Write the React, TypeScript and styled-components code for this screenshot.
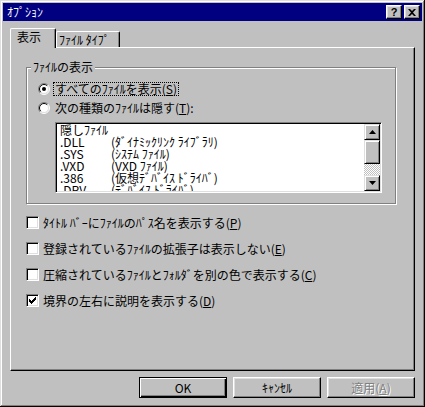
import React from 'react';
import styled, { createGlobalStyle } from 'styled-components';

const face = '#c0c0c0';
const shade = '#808080';
const light = '#dfdfdf';

const GlobalStyle = createGlobalStyle`
  body {
    margin: 0;
    background: ${face};
  }
  * {
    box-sizing: border-box;
  }
`;

const Window = styled.div`
  width: 425px;
  height: 407px;
  padding: 3px;
  display: flex;
  flex-direction: column;
  background: ${face};
  box-shadow: inset -1px -1px #000, inset 1px 1px ${light}, inset -2px -2px ${shade}, inset 2px 2px #fff;
  font-family: 'Noto Sans CJK JP', 'Noto Sans', sans-serif;
  font-size: 12px;
  color: #000;
`;

const TitleBar = styled.div`
  height: 18px;
  display: flex;
  align-items: center;
  padding: 0 2px;
  background: #000080;
`;

const TitleText = styled.span`
  padding-left: 2px;
  color: #fff;
  line-height: 14px;
`;

const CaptionButtons = styled.div`
  margin-left: auto;
  display: flex;
  gap: 2px;
`;

const CaptionButton = styled.div`
  width: 16px;
  height: 14px;
  display: flex;
  align-items: center;
  justify-content: center;
  background: ${face};
  border: 1px solid;
  border-color: #fff #000 #000 #fff;
  box-shadow: inset -1px -1px ${shade}, inset 1px 1px ${light};
  font-family: 'Liberation Sans', sans-serif;
  font-weight: bold;
  font-size: 11px;
  line-height: 11px;
`;

const Body = styled.div`
  flex: 1;
  display: flex;
  flex-direction: column;
  padding: 7px 7px 6px;
`;

const TabRow = styled.div`
  height: 19px;
  display: flex;
  align-items: flex-end;
`;

const Tab = styled.div<{ $active?: boolean; $width: number; $pad: number }>`
  position: relative;
  z-index: ${(p) => (p.$active ? 1 : 0)};
  width: ${(p) => p.$width}px;
  height: ${(p) => (p.$active ? 20 : 16)}px;
  margin-bottom: ${(p) => (p.$active ? -1 : 0)}px;
  padding: 1px 0 0 ${(p) => p.$pad}px;
  background: ${face};
  border: 1px solid;
  border-bottom: none;
  border-color: #fff #000 #000 #fff;
  border-radius: 2px 2px 0 0;
  box-shadow: inset -1px 0 ${shade};
  line-height: 14px;
  white-space: nowrap;
`;

const Panel = styled.div`
  height: 324px;
  display: flex;
  flex-direction: column;
  padding: 12px 18px 0 15px;
  border: 1px solid;
  border-color: #fff #000 #000 #fff;
  box-shadow: inset -1px -1px ${shade};
`;

const Group = styled.fieldset`
  margin: 0;
  padding: 0 0 10px;
  min-width: 0;
  border: 1px solid ${shade};
  box-shadow: inset 1px 1px #fff, 1px 1px #fff;
`;

const GroupTitle = styled.legend`
  margin-left: 4px;
  padding: 0 2px;
  line-height: 14px;
  background: ${face};
`;

const RadioList = styled.div`
  padding: 5px 0 0 11px;
  display: flex;
  flex-direction: column;
`;

const OptionRow = styled.div<{ $height: number; $gap: number }>`
  height: ${(p) => p.$height}px;
  display: flex;
  align-items: center;
  gap: ${(p) => p.$gap}px;
  white-space: nowrap;
`;

const Label = styled.span<{ $focused?: boolean }>`
  padding: 0 1px;
  line-height: 12px;
  border: 1px dotted ${(p) => (p.$focused ? '#000' : 'transparent')};
`;

const ListBox = styled.div`
  width: 327px;
  height: 71px;
  margin: 5px 0 0 28px;
  padding: 1px;
  display: flex;
  background: #fff;
  border: 1px solid;
  border-color: ${shade} #fff #fff ${shade};
  box-shadow: inset 1px 1px #000, inset -1px -1px ${light};
`;

const ListItems = styled.div`
  flex: 1;
  overflow: hidden;
  padding-left: 3px;
`;

const ListRow = styled.div`
  height: 12px;
  display: flex;
  line-height: 12px;
  white-space: nowrap;
`;

const Ext = styled.span`
  width: 51px;
`;

const ScrollBar = styled.div`
  width: 16px;
  display: flex;
  flex-direction: column;
`;

const ScrollButton = styled.div<{ $size: number }>`
  height: ${(p) => p.$size}px;
  display: flex;
  align-items: center;
  justify-content: center;
  background: ${face};
  border: 1px solid;
  border-color: ${light} #000 #000 ${light};
  box-shadow: inset 1px 1px #fff, inset -1px -1px ${shade};
`;

const ScrollTrack = styled.div`
  flex: 1;
  background: repeating-conic-gradient(#fff 0 25%, ${face} 0 50%) 0 0 / 2px 2px;
`;

const CheckList = styled.div`
  margin-top: 5px;
  display: flex;
  flex-direction: column;
`;

const CheckBox = styled.div`
  width: 13px;
  height: 13px;
  flex: none;
  display: flex;
  align-items: center;
  justify-content: center;
  background: #fff;
  border: 1px solid;
  border-color: ${shade} #fff #fff ${shade};
  box-shadow: inset 1px 1px #000, inset -1px -1px ${light};
`;

const ButtonRow = styled.div`
  margin-top: 6px;
  display: flex;
  justify-content: flex-end;
  gap: 6px;
`;

const Button = styled.div<{ $default?: boolean; $disabled?: boolean }>`
  width: 88px;
  height: 21px;
  display: flex;
  align-items: center;
  justify-content: center;
  background: ${face};
  border: 1px solid;
  border-color: ${(p) => (p.$default ? '#000' : '#fff #000 #000 #fff')};
  box-shadow: ${(p) =>
    p.$default
      ? `inset 1px 1px #fff, inset -1px -1px #000, inset -2px -2px ${shade}`
      : `inset -1px -1px ${shade}, inset 1px 1px ${light}`};
  color: ${(p) => (p.$disabled ? shade : '#000')};
  text-shadow: ${(p) => (p.$disabled ? '1px 1px #fff' : 'none')};
  line-height: 14px;
`;

const Radio = ({ checked }: { checked?: boolean }) => (
  <svg width="12" height="12" viewBox="0 0 12 12" style={{ flex: 'none' }}>
    <circle cx="6" cy="6" r="5" fill="#fff" />
    <path d="M2.1 9.9A5.5 5.5 0 0 1 9.9 2.1" fill="none" stroke={shade} />
    <path d="M9.9 2.1A5.5 5.5 0 0 1 2.1 9.9" fill="none" stroke="#fff" />
    <path d="M2.8 9.2A4.5 4.5 0 0 1 9.2 2.8" fill="none" stroke="#000" />
    <path d="M9.2 2.8A4.5 4.5 0 0 1 2.8 9.2" fill="none" stroke={light} />
    {checked && <circle cx="6" cy="6" r="2" fill="#000" />}
  </svg>
);

const Check = () => (
  <svg width="7" height="7" viewBox="0 0 7 7">
    <path d="M0 2h1v1h1v1h1V3h1V2h1V1h1V0h1v3H6v1H5v1H4v1H3v1H2V6H1V5H0z" fill="#000" />
  </svg>
);

const Arrow = ({ up }: { up?: boolean }) => (
  <svg width="7" height="4" viewBox="0 0 7 4">
    <path d={up ? 'M3.5 0L7 4H0z' : 'M0 0h7L3.5 4z'} fill="#000" />
  </svg>
);

const CloseGlyph = () => (
  <svg width="8" height="7" viewBox="0 0 8 7">
    <path d="M0 0h2l2 2 2-2h2L5 3.5 8 7H6L4 5 2 7H0l3-3.5z" fill="#000" />
  </svg>
);

const hiddenTypes = [
  ['.DLL', '(ﾀﾞｲﾅﾐｯｸﾘﾝｸ ﾗｲﾌﾞﾗﾘ)'],
  ['.SYS', '(ｼｽﾃﾑ ﾌｧｲﾙ)'],
  ['.VXD', '(VXD ﾌｧｲﾙ)'],
  ['.386', '(仮想ﾃﾞﾊﾞｲｽ ﾄﾞﾗｲﾊﾞ)'],
  ['.DRV', '(ﾃﾞﾊﾞｲｽ ﾄﾞﾗｲﾊﾞ)'],
];

const checks = [
  { text: 'ﾀｲﾄﾙ ﾊﾞｰにﾌｧｲﾙのﾊﾟｽ名を表示する', key: 'P', checked: false },
  { text: '登録されているﾌｧｲﾙの拡張子は表示しない', key: 'E', checked: false },
  { text: '圧縮されているﾌｧｲﾙとﾌｫﾙﾀﾞを別の色で表示する', key: 'C', checked: false },
  { text: '境界の左右に説明を表示する', key: 'D', checked: true },
];

export default function App() {
  return (
    <>
      <GlobalStyle />
      <Window>
        <TitleBar>
          <TitleText>ｵﾌﾟｼｮﾝ</TitleText>
          <CaptionButtons>
            <CaptionButton>?</CaptionButton>
            <CaptionButton>
              <CloseGlyph />
            </CaptionButton>
          </CaptionButtons>
        </TitleBar>
        <Body>
          <TabRow>
            <Tab $active $width={46} $pad={6}>
              表示
            </Tab>
            <Tab $width={64} $pad={2}>
              ﾌｧｲﾙ ﾀｲﾌﾟ
            </Tab>
          </TabRow>
          <Panel>
            <Group>
              <GroupTitle>ﾌｧｲﾙの表示</GroupTitle>
              <RadioList>
                <OptionRow $height={19} $gap={3}>
                  <Radio checked />
                  <Label $focused>
                    すべてのﾌｧｲﾙを表示(<u>S</u>)
                  </Label>
                </OptionRow>
                <OptionRow $height={19} $gap={3}>
                  <Radio />
                  <Label>
                    次の種類のﾌｧｲﾙは隠す(<u>T</u>):
                  </Label>
                </OptionRow>
              </RadioList>
              <ListBox>
                <ListItems>
                  <ListRow>隠しﾌｧｲﾙ</ListRow>
                  {hiddenTypes.map(([ext, desc]) => (
                    <ListRow key={ext}>
                      <Ext>{ext}</Ext>
                      <span>{desc}</span>
                    </ListRow>
                  ))}
                </ListItems>
                <ScrollBar>
                  <ScrollButton $size={16}>
                    <Arrow up />
                  </ScrollButton>
                  <ScrollButton $size={24} />
                  <ScrollTrack />
                  <ScrollButton $size={16}>
                    <Arrow />
                  </ScrollButton>
                </ScrollBar>
              </ListBox>
            </Group>
            <CheckList>
              {checks.map((c) => (
                <OptionRow key={c.key} $height={26} $gap={4}>
                  <CheckBox>{c.checked && <Check />}</CheckBox>
                  <span>
                    {c.text}(<u>{c.key}</u>)
                  </span>
                </OptionRow>
              ))}
            </CheckList>
          </Panel>
          <ButtonRow>
            <Button $default>OK</Button>
            <Button>ｷｬﾝｾﾙ</Button>
            <Button $disabled>
              <span>
                適用(<u>A</u>)
              </span>
            </Button>
          </ButtonRow>
        </Body>
      </Window>
    </>
  );
}
